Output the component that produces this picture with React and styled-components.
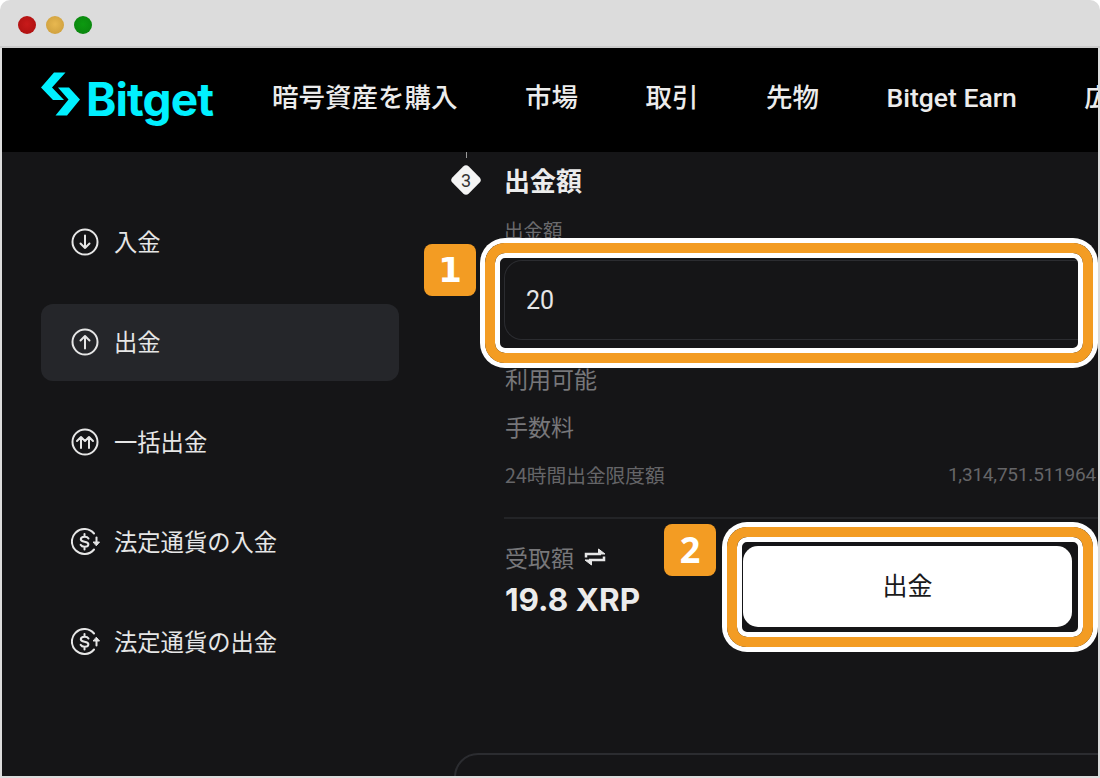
import React from "react";
import styled, { createGlobalStyle } from "styled-components";

const Global = createGlobalStyle`
  html, body { margin: 0; padding: 0; background: #fff; }
  #root { width: 1100px; height: 778px; overflow: hidden; }
  * { box-sizing: border-box; }
`;
const FONT = `"Noto Sans CJK JP", "Noto Sans", sans-serif`;

const Frame = styled.div`
  position: relative; width: 1100px; height: 778px; background: #dcdcdc;
  border-radius: 10px 10px 0 0; padding: 0 2px 2px; display: flex; flex-direction: column;
  overflow: hidden; font-family: ${FONT};
`;
const TitleBar = styled.div`
  height: 48px; flex: none; display: flex; align-items: center; gap: 10px; padding: 4px 0 0 18px;
  border-bottom: 2px solid #cbcbcb; margin: 0 -2px;
`;
const Dot = styled.span`
  width: 18px; height: 18px; border-radius: 50%;
  background: radial-gradient(circle at 50% 45%, ${p => p.$c} 0%, ${p => p.$e} 100%);
`;
const Header = styled.header`
  height: 104px; flex: none; background: #000; display: flex; align-items: center; overflow: hidden; padding-left: 38px;
`;
const Logo = styled.div`
  display: flex; align-items: flex-start; width: 232px; flex: none; color: #00f0ff; gap: 5px; margin-top: -6px;
`;
const LogoText = styled.span`
  font-family: Inter, sans-serif; font-weight: 700; font-size: 46px; line-height: 46px; letter-spacing: -0.9px;
  margin-top: 4px;
`;
const Nav = styled.nav`
  display: flex; gap: 67.500px; white-space: nowrap; flex: none; margin-top: -4px;
`;
const NavItem = styled.a`
  font-family: Roboto, ${FONT}; font-size: 26.500px; font-weight: 500; color: #ececec; line-height: 36px;
`;
const Body = styled.div`
  flex: 1; min-height: 0; display: flex; background: #151517; overflow: hidden;
`;
const Sidebar = styled.aside`
  width: 448px; flex: none; padding: 52px 51px 0 39px; display: flex; flex-direction: column; gap: 23px;
`;
const SideItem = styled.div`
  height: 77px; border-radius: 12px; display: flex; align-items: center; gap: 15px; padding: 0 0 2px 30px;
  background: ${p => (p.$active ? "#25262a" : "transparent")};
  color: #e6e6e6; font-size: 23.300px; line-height: 30px;
`;
const SideLabel = styled.span`
  position: relative; top: -1px;
`;
const Main = styled.main`
  flex: 1; min-width: 0; display: flex; flex-direction: column; position: relative;
`;
const StepLine = styled.div`
  width: 1px; height: 6px; background: #9a9a9a; margin-left: 16px;
`;
const StepHead = styled.div`
  display: flex; align-items: center; gap: 22px; height: 36px; margin-top: 4px;
`;
const StepTitle = styled.div`
  font-size: 26px; font-weight: 700; color: #ececec; line-height: 36px;
`;
const Form = styled.div`
  padding-left: 54px; display: flex; flex-direction: column;
`;
const FieldLabel = styled.div`
  font-size: 19.500px; line-height: 26px; color: #6a6a6d; margin-top: 19px;
`;
const InputBox = styled.div`
  height: 80px; margin-top: 17px; border: 1px solid #2b2c30; border-right: 0; border-radius: 18px 0 0 18px;
  display: flex; align-items: center; padding-left: 21px; font-family: Roboto, sans-serif; font-size: 25px; color: #e6e6e6;
`;
const InfoLine = styled.div`
  font-size: 23px; line-height: 32px; color: #77777a; margin-top: ${p => p.$mt}px; padding-left: 1px;
`;
const LimitRow = styled.div`
  display: flex; justify-content: space-between; align-items: center; height: 26px; margin-top: 19px; padding: 0 2px 0 1px;
  font-size: 19.700px; color: #656568; white-space: nowrap;
`;
const LimitValue = styled.span`
  font-family: Roboto, sans-serif; font-size: 19px; letter-spacing: -0.2px;
`;
const Divider = styled.div`
  height: 2px; background: #232427; margin-top: 30px;
`;
const Footer = styled.div`
  display: flex; justify-content: space-between; padding-top: 27px; padding-right: 26px;
`;
const Receive = styled.div`
  display: flex; flex-direction: column; padding-left: 1px; margin-top: -3px;
`;
const ReceiveLabel = styled.div`
  display: flex; align-items: center; gap: 10px; font-size: 23px; line-height: 28px; color: #77777a;
`;
const ReceiveValue = styled.div`
  font-family: Inter, sans-serif; font-weight: 700; font-size: 31.500px; line-height: 38px; color: #ececec; margin-top: 10px;
`;
const PrimaryButton = styled.div`
  width: 329px; height: 81px; background: #fff; border-radius: 15px; display: flex; align-items: center; justify-content: center;
  font-size: 25px; color: #1a1a1a; padding-bottom: 5px;
`;
const BottomCard = styled.div`
  position: absolute; left: 4px; top: 601px; width: 800px; height: 60px; border: 2px solid #2b2c30; border-radius: 24px 0 0 0;
`;
const Highlight = styled.div`
  position: absolute; left: ${p => p.$x}px; top: ${p => p.$y}px; width: ${p => p.$w}px; height: ${p => p.$h}px;
  border: 10px solid #f39c23; border-radius: 20px;
  box-shadow: 0 0 0 5px #fff, inset 0 0 0 5px #fff;
`;
const Badge = styled.div`
  position: absolute; left: ${p => p.$x}px; top: ${p => p.$y}px; width: 52px; height: 52px; border-radius: 8px;
  background: #f39c23; color: #fff; font-family: ${p => p.$font}; font-weight: 700; font-size: ${p => p.$size}px; line-height: 52px; text-align: center;
`;

const Mark = () => (
  <svg width="41" height="45" viewBox="0 0 41 45" fill="currentColor">
    <polygon points="14,0.500 25.500,0.500 12,15.500 24,28 13,28 1,15.500" />
    <polygon points="18,15.500 29,15.500 40,27.500 27,43.500 15.500,43.500 28.500,27.500" />
  </svg>
);

const Circle = ({ children }) => (
  <svg width="28" height="28" viewBox="0 0 28 28" fill="none" stroke="currentColor" strokeWidth="2" strokeLinecap="round" strokeLinejoin="round">
    <circle cx="14" cy="14" r="12.500" />
    {children}
  </svg>
);
const Down = () => <Circle><path d="M14 7.500v12.500M9.500 15.500l4.500 4.500 4.500-4.500" /></Circle>;
const Up = () => <Circle><path d="M14 20.500V8M9.500 12.500L14 8l4.500 4.500" /></Circle>;
const Multi = () => (
  <Circle>
    <path d="M10 20V9M6 13l4-4 4 4M18 20V9M14 13l4-4 4 4" />
  </Circle>
);
const Fiat = ({ up }) => (
  <svg width="30" height="28" viewBox="0 0 30 28" fill="none" stroke="currentColor" strokeWidth="2" strokeLinecap="round" strokeLinejoin="round" style={{ marginRight: -2 }}>
    <path d="M23 5.500A12.500 12.500 0 1 0 23 21.500" />
    <path d="M17.500 10.500c-.6-1.200-1.800-1.800-4-1.800-2.200 0-3.700 1-3.700 2.500 0 3.600 7.600 1.300 7.600 5 0 1.600-1.600 2.600-3.800 2.600-2.200 0-3.400-.8-4-2M13.500 6v2.700M13.500 18.800v2.700" />
    {up ? (
      <path d="M25.500 17.500v-6" />
    ) : (
      <path d="M25.500 9.500v6" />
    )}
    {up ? (
      <path d="M25.500 9.500l3 3.500h-6z" fill="currentColor" strokeWidth="1" />
    ) : (
      <path d="M25.500 17.500l3-3.500h-6z" fill="currentColor" strokeWidth="1" />
    )}
  </svg>
);
const Swap = () => (
  <svg width="22" height="18" viewBox="0 0 22 18" fill="none" stroke="#e6e6e6" strokeWidth="2.500">
    <path d="M2 9.500V6h15" />
    <path d="M20 8.500V12H5" />
    <path d="M14.500 1l6.500 5h-6.500zM7.500 17L1 12h6.500z" fill="#e6e6e6" strokeWidth="1" />
  </svg>
);
const Diamond = () => (
  <svg width="32" height="32" viewBox="0 0 32 32">
    <rect x="4.500" y="4.500" width="23" height="23" rx="4" transform="rotate(45 16 16)" fill="#f4f4f4" />
    <text x="16" y="22.500" textAnchor="middle" fontFamily="Roboto, sans-serif" fontSize="18" fill="#333">3</text>
  </svg>
);

const items = [
  [<Down key="a" />, "入金"],
  [<Up key="a" />, "出金", true],
  [<Multi key="a" />, "一括出金"],
  [<Fiat key="a" />, "法定通貨の入金"],
  [<Fiat key="a" up />, "法定通貨の出金"],
];

export default function App() {
  return (
    <Frame>
      <Global />
      <TitleBar>
        <Dot $c="#c81a1a" $e="#a80f0f" />
        <Dot $c="#e8b850" $e="#c89a3a" />
        <Dot $c="#0c9a10" $e="#0a800e" />
      </TitleBar>
      <Header>
        <Logo><Mark /><LogoText>Bitget</LogoText></Logo>
        <Nav>
          {["暗号資産を購入", "市場", "取引", "先物", "Bitget Earn", "広告"].map(t => <NavItem key={t}>{t}</NavItem>)}
        </Nav>
      </Header>
      <Body>
        <Sidebar>
          {items.map(([icon, label, active]) => (
            <SideItem key={label} $active={active}>{icon}<SideLabel>{label}</SideLabel></SideItem>
          ))}
        </Sidebar>
        <Main>
          <StepLine />
          <StepHead><Diamond /><StepTitle>出金額</StepTitle></StepHead>
          <Form>
            <FieldLabel>出金額</FieldLabel>
            <InputBox>20</InputBox>
            <InfoLine $mt={22}>利用可能</InfoLine>
            <InfoLine $mt={16}>手数料</InfoLine>
            <LimitRow><span>24時間出金限度額</span><LimitValue>1,314,751.511964</LimitValue></LimitRow>
            <Divider />
            <Footer>
              <Receive>
                <ReceiveLabel>受取額<Swap /></ReceiveLabel>
                <ReceiveValue>19.8 XRP</ReceiveValue>
              </Receive>
              <PrimaryButton>出金</PrimaryButton>
            </Footer>
          </Form>
          <BottomCard />
        </Main>
      </Body>
      <Highlight $x={485} $y={243} $w={608} $h={120} />
      <Badge $x={424} $y={244} $font={`"DejaVu Sans", sans-serif`} $size={34}>1</Badge>
      <Highlight $x={727} $y={527} $w={366} $h={120} />
      <Badge $x={664} $y={524} $font={`"Noto Sans", sans-serif`} $size={36}>2</Badge>
    </Frame>
  );
}
